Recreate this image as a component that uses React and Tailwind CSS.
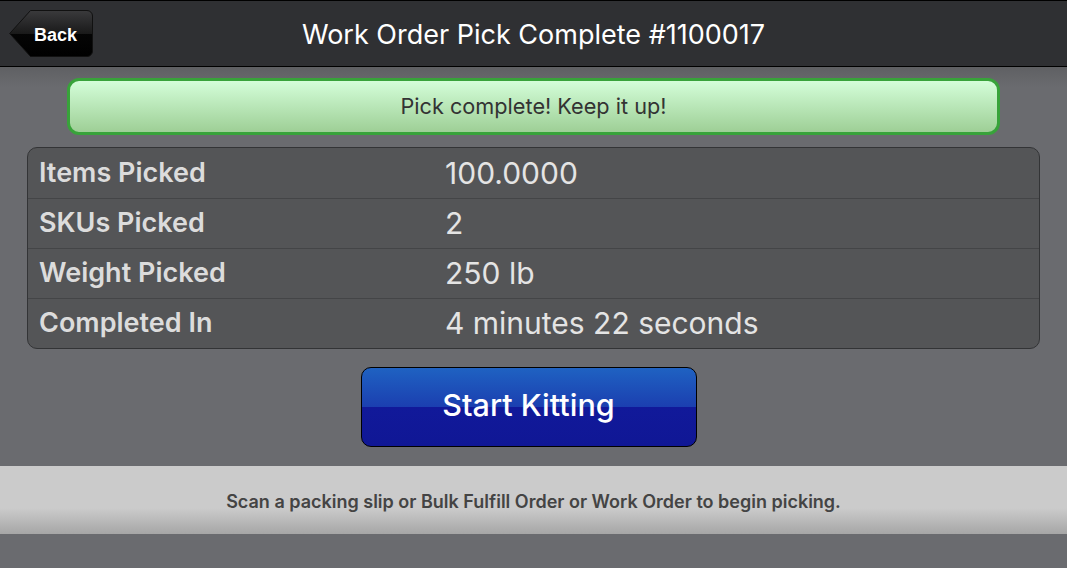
import React from "react";

const rows = [
  ["Items Picked", "100.0000"],
  ["SKUs Picked", "2"],
  ["Weight Picked", "250 lb"],
  ["Completed In", "4 minutes 22 seconds"],
];

export default function App() {
  return (
    <div className="w-[1067px] h-[568px] bg-[#6a6b6f] flex flex-col overflow-hidden" style={{ fontFamily: "Inter, 'Noto Sans', sans-serif" }}>
      <header className="h-[67px] shrink-0 bg-[#2f3033] border-t border-b border-black flex items-center relative">
        <button className="relative ml-[9px] w-[84px] h-[47px] flex items-center justify-end pr-[16px] pt-[3px]">
          <svg className="absolute inset-0" width="84" height="47" viewBox="0 0 84 47">
            <defs>
              <linearGradient id="bk" x1="0" y1="0" x2="0" y2="1">
                <stop offset="0" stopColor="#3a3a3c" />
                <stop offset="0.5" stopColor="#1a1a1a" />
                <stop offset="0.5" stopColor="#050505" />
                <stop offset="1" stopColor="#000" />
              </linearGradient>
            </defs>
            <path d="M21.5 0.5 H78 a5.5 5.5 0 0 1 5.5 5.5 V41 a5.5 5.5 0 0 1 -5.5 5.5 H21.5 L0.7 23.5 Z" fill="url(#bk)" stroke="#111" strokeWidth="1" />
          </svg>
          <span className="relative text-white font-bold text-[18px]" style={{ fontFamily: "'Liberation Sans', Arial, sans-serif" }}>Back</span>
        </button>
        <h1 className="absolute left-0 right-0 top-[16px] text-center text-white text-[27px] leading-[36px] pointer-events-none">Work Order Pick Complete #1100017</h1>
      </header>

      <main className="flex-1 flex flex-col bg-gradient-to-b from-[#5f6063] to-[#6a6b6f] to-[20px]">
        <div className="mt-[11px] mx-[67px] h-[57px] rounded-[12px] border-[3px] border-[#38a33a] bg-gradient-to-b from-[#d4fed9] to-[#9ecf96] flex items-center justify-center text-[21.7px] text-[#333]">
          Pick complete! Keep it up!
        </div>

        <div className="mt-[12px] mx-[27px] rounded-[10px] border border-[#333436] bg-[#545557] overflow-hidden">
          {rows.map(([k, v], i) => (
            <div key={k} className={`h-[50px] flex items-center ${i > 0 ? "border-t border-[#444547]" : ""}`}>
              <div className="w-[417px] pl-[11px] text-[27px] font-semibold text-[#dcdcdc]">{k}</div>
              <div className="text-[30px] text-[#e4e4e4]">{v}</div>
            </div>
          ))}
        </div>

        <div className="mt-[18px] flex justify-center pr-[10px]">
          <button className="w-[336px] h-[80px] pb-[4px] rounded-[10px] border border-black text-white text-[30.5px] font-medium bg-[linear-gradient(to_bottom,#1f62c2_0%,#1b3fb0_50%,#11199a_50%,#101795_100%)]">
            Start Kitting
          </button>
        </div>

        <div className="mt-[19px] h-[68px] pt-[2px] bg-[linear-gradient(to_bottom,#cbcbcb_0%,#cbcbcb_62%,#a6a6a6_100%)] flex items-center justify-center text-[18px] font-semibold text-[#444]">
          Scan a packing slip or Bulk Fulfill Order or Work Order to begin picking.
        </div>
      </main>
    </div>
  );
}
